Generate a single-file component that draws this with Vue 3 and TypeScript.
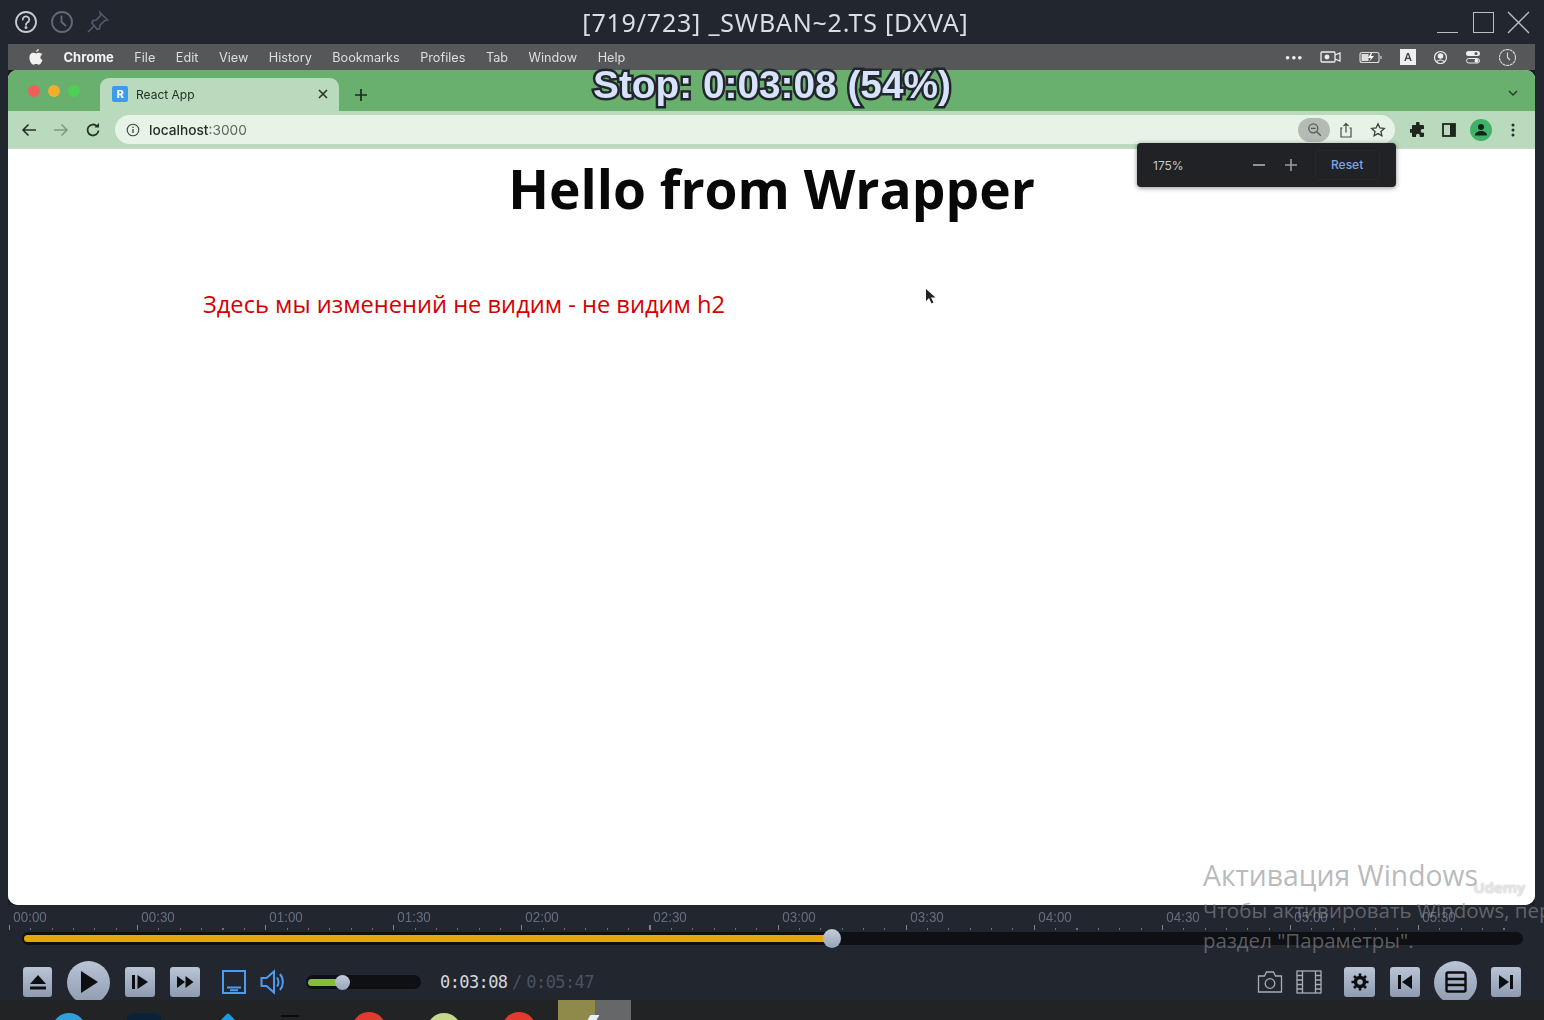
<script setup lang="ts">
const menuItems = ['File', 'Edit', 'View', 'History', 'Bookmarks', 'Profiles', 'Tab', 'Window', 'Help']
const timeLabels = ['00:00', '00:30', '01:00', '01:30', '02:00', '02:30', '03:00', '03:30', '04:00', '04:30', '05:00', '05:30']
const progress = 54
const taskIcons = ['ti-blue', 'ti-navy', 'ti-code', 'ti-term', 'ti-red', 'ti-lime', 'ti-red2']
</script>

<template>
  <div class="player">
    <header class="titlebar">
      <div class="title-left">
        <svg width="24" height="24" viewBox="0 0 24 24" fill="none" stroke="#c9ccd2" stroke-width="1.8">
          <circle cx="12" cy="12" r="10" />
          <path d="M8.800 9.600a3.200 3.200 0 1 1 4.900 2.700c-1.100.7-1.700 1.200-1.700 2.500" stroke-linecap="round" />
          <circle cx="12" cy="17.600" r=".6" fill="#c9ccd2" />
        </svg>
        <svg width="24" height="24" viewBox="0 0 24 24" fill="none" stroke="#626a78" stroke-width="1.8">
          <circle cx="12" cy="12" r="10" />
          <path d="M11.500 5.500V12l4.500 4" />
        </svg>
        <svg width="24" height="24" viewBox="0 0 24 24" fill="none" stroke="#4f5868" stroke-width="1.7">
          <path d="M14 2.500l7.500 7.500-3 .8-4.400 4.400-.6 3.600-2.400.6L5.900 13l.9-2.400 3.400-.6 4.300-4.400z" />
          <path d="M8 16l-6 6" />
        </svg>
      </div>
      <div class="title-text">[719/723] _SWBAN~2.TS [DXVA]</div>
      <div class="title-right">
        <span class="win-min"></span>
        <span class="win-max"></span>
        <svg width="24" height="24" viewBox="0 0 24 24" stroke="#b9bec6" stroke-width="1.400">
          <path d="M2 2l21 21M23 2L2 23" />
        </svg>
      </div>
    </header>

    <main class="video">
      <div class="mac-menu">
        <svg class="apple" width="14" height="16" viewBox="0 0 14 16" fill="#f1f1f1">
          <path d="M9.800 0c.1 1.200-1 2.900-2.600 2.900C7 1.500 8.300.2 9.800 0zM11.400 8.500c0-1.500.9-2.400 1.900-3-.6-1-1.800-1.700-3.100-1.700-1.300 0-2.200.7-3 .7-.9 0-1.800-.7-3-.7C2.300 3.800.4 5.500.4 8.500c0 3 2.100 7.300 4 7.300 1 0 1.500-.7 2.700-.7 1.200 0 1.700.7 2.700.7 1.600 0 3.100-2.800 3.700-4.700-1.400-.6-2.100-1.500-2.100-2.600z" />
        </svg>
        <span class="menu-app">Chrome</span>
        <span v-for="item in menuItems" :key="item" class="menu-item">{{ item }}</span>
        <div class="menu-status">
          <span class="dots">•••</span>
          <svg width="22" height="14" viewBox="0 0 22 14" fill="none" stroke="#eee" stroke-width="1.300">
            <rect x="1" y="2" width="14" height="10" rx="1" />
            <circle cx="7" cy="7" r="1.800" fill="#eee" />
            <path d="M15 5l5-2v8l-5-2" />
          </svg>
          <svg width="24" height="13" viewBox="0 0 24 13" fill="none" stroke="#ddd" stroke-width="1.100">
            <rect x="1" y="1.500" width="19" height="10" rx="2" />
            <rect x="2.500" y="3" width="7" height="7" fill="#ddd" stroke="none" />
            <path d="M12 2l-3 5h3l-2 4 5-6h-3l1-3z" fill="#fff" stroke="none" />
            <path d="M22 5v3" />
          </svg>
          <span class="a-box">A</span>
          <svg width="15" height="15" viewBox="0 0 15 15" fill="none" stroke="#eee" stroke-width="1.200">
            <circle cx="7.500" cy="7.500" r="6" />
            <circle cx="7.500" cy="6" r="2.200" fill="#eee" />
            <path d="M3.500 11.500c2-2 6-2 8 0" />
          </svg>
          <svg width="16" height="14" viewBox="0 0 16 14" fill="#eee">
            <rect x="1" y="1" width="14" height="5" rx="2.500" />
            <rect x="1.500" y="8.500" width="13" height="4.500" rx="2.200" fill="none" stroke="#eee" />
            <circle cx="11" cy="3.500" r="1.500" fill="#555" />
            <circle cx="11.500" cy="10.700" r="2" />
          </svg>
          <svg width="19" height="19" viewBox="0 0 19 19" fill="none" stroke="#ddd" stroke-width="1.100">
            <circle cx="9.500" cy="9.500" r="8" stroke-dasharray="3 .6" />
            <path d="M9.500 4.500v5l2.500 2.500" />
          </svg>
        </div>
      </div>

      <div class="browser">
        <div class="tabstrip">
          <div class="traffic">
            <i class="dot red"></i><i class="dot yellow"></i><i class="dot green"></i>
          </div>
          <div class="tab">
            <span class="favicon">R</span>
            <span class="tab-title">React App</span>
            <svg width="10" height="10" viewBox="0 0 10 10" stroke="#2a2f2b" stroke-width="1.600"><path d="M1 1l8 8M9 1L1 9" /></svg>
          </div>
          <svg class="new-tab" width="12" height="12" viewBox="0 0 12 12" stroke="#1f2a20" stroke-width="1.700"><path d="M6 0v12M0 6h12" /></svg>
          <svg class="chev" width="10" height="7" viewBox="0 0 10 7" fill="none" stroke="#2a3a2c" stroke-width="1.500"><path d="M1 1l4 4 4-4" /></svg>
        </div>

        <div class="toolbar">
          <svg width="16" height="14" viewBox="0 0 16 14" fill="none" stroke="#28302a" stroke-width="1.600"><path d="M15 7H2M7.500 1.500L2 7l5.500 5.500" /></svg>
          <svg class="fwd" width="16" height="14" viewBox="0 0 16 14" fill="none" stroke="#7f9a82" stroke-width="1.500"><path d="M1 7h13M8.500 1.500L14 7l-5.500 5.500" /></svg>
          <svg class="reload" width="16" height="16" viewBox="0 0 16 16" fill="none" stroke="#28302a" stroke-width="1.800">
            <path d="M13.500 8.500a5.500 5.500 0 1 1-1.600-4.400" />
            <path d="M14 1v4.500H9.500z" fill="#28302a" stroke="none" />
          </svg>
          <div class="omnibox">
            <svg width="14" height="14" viewBox="0 0 14 14" fill="none" stroke="#3c443e" stroke-width="1.100">
              <circle cx="7" cy="7" r="5.800" />
              <path d="M7 6v4M7 3.700v1.200" stroke-width="1.300" />
            </svg>
            <span class="url"><b>localhost</b>:3000</span>
            <div class="omni-end">
              <span class="zoom-pill">
                <svg width="15" height="15" viewBox="0 0 15 15" fill="none" stroke="#555b57" stroke-width="1.300">
                  <circle cx="6.300" cy="6.300" r="4.500" />
                  <path d="M4 6.300h4.600M9.800 9.800l4 4" />
                </svg>
              </span>
              <svg width="14" height="16" viewBox="0 0 14 16" fill="none" stroke="#454c47" stroke-width="1.200">
                <path d="M3.500 6H2v9h10V6h-1.500M7 10.500V1.500M4.500 4L7 1.500 9.500 4" />
              </svg>
              <svg width="16" height="16" viewBox="0 0 16 16" fill="none" stroke="#3a403c" stroke-width="1.300">
                <path d="M8 1.800l1.900 4.100 4.400.5-3.300 3 .9 4.400L8 11.600l-3.900 2.200.9-4.400-3.300-3 4.400-.5z" />
              </svg>
            </div>
          </div>
          <svg class="ext" width="16" height="16" viewBox="0 0 16 16" fill="#1f2620">
            <path d="M6 1.500a1.800 1.800 0 0 1 3.600 0V3H13a1 1 0 0 1 1 1v3h-1.400a1.900 1.900 0 0 0 0 3.800H14V14a1 1 0 0 1-1 1H9.800v-1.300a1.900 1.900 0 0 0-3.800 0V15H3a1 1 0 0 1-1-1v-3.200H.8a1.900 1.900 0 0 1 0-3.800H2V4a1 1 0 0 1 1-1h3z" />
          </svg>
          <svg class="side" width="14" height="14" viewBox="0 0 14 14"><rect x="1" y="1" width="12" height="12" fill="none" stroke="#1f2620" stroke-width="1.800" /><rect x="8" y="1" width="5" height="12" fill="#1f2620" /></svg>
          <span class="avatar">
            <svg width="14" height="14" viewBox="0 0 14 14" fill="#10231a"><circle cx="7" cy="4" r="3" /><path d="M1 12.500c0-6 12-6 12 0z" /></svg>
          </span>
          <svg class="kebab" width="4" height="14" viewBox="0 0 4 14" fill="#28302a"><circle cx="2" cy="2" r="1.500" /><circle cx="2" cy="7" r="1.500" /><circle cx="2" cy="12" r="1.500" /></svg>
        </div>

        <div class="page">
          <h1>Hello from Wrapper</h1>
          <p class="note">Здесь мы изменений не видим - не видим h2</p>
        </div>

        <div class="zoom-popup">
          <span class="zoom-val">175%</span>
          <span class="zoom-minus"></span>
          <svg class="zoom-plus" width="12" height="12" viewBox="0 0 12 12" stroke="#9a9da1" stroke-width="1.600"><path d="M6 0v12M0 6h12" /></svg>
          <span class="zoom-reset">Reset</span>
        </div>

        <svg class="cursor" width="12" height="17" viewBox="0 0 12 17" fill="#222"><path d="M1 1v12l3-3 2.500 5.500 2-1L6 9.500h4.500z" /></svg>
        <span class="udemy">Udemy</span>
      </div>

      <div class="osd">Stop: 0:03:08 (54%)</div>
    </main>

    <section class="timeline">
      <div class="labels">
        <span v-for="t in timeLabels" :key="t" class="label">{{ t }}</span>
      </div>
      <div class="ticks"></div>
      <div class="track">
        <div class="fill" :style="{ width: progress + '%' }">
          <span class="knob"></span>
        </div>
      </div>
    </section>

    <section class="controls">
      <div class="ctl-group">
        <button class="btn">
          <svg width="18" height="18" viewBox="0 0 18 18" fill="#0d0e10"><path d="M9 2l8 9H1z" /><rect x="1" y="13.500" width="16" height="3" /></svg>
        </button>
        <button class="btn round">
          <svg width="20" height="24" viewBox="0 0 20 24" fill="#0d0e10"><path d="M2 1l17 11L2 23z" /></svg>
        </button>
        <button class="btn">
          <svg width="18" height="16" viewBox="0 0 18 16" fill="#0d0e10"><rect x="1" y="1" width="3" height="14" /><path d="M6.500 1L17 8 6.500 15z" /></svg>
        </button>
        <button class="btn ff">
          <svg width="18" height="14" viewBox="0 0 18 14" fill="#0d0e10"><path d="M1 1l8 6-8 6zM9.500 1l8 6-8 6z" /></svg>
        </button>
        <svg class="pl-ico" width="26" height="26" viewBox="0 0 26 26" fill="none" stroke="#4d9bf0" stroke-width="2">
          <rect x="2" y="2" width="22" height="22" />
          <path d="M6 18.500h14M9 21.300h8" />
        </svg>
        <svg class="vol-ico" width="26" height="26" viewBox="0 0 26 26" fill="none" stroke="#4d9bf0" stroke-width="2">
          <path d="M1.500 9h5L14 2.500v21L6.500 17h-5z" />
          <path d="M17 8.500c2 2.500 2 6.500 0 9M20 5c3.800 4.500 3.800 11.500 0 16" />
        </svg>
        <div class="vol-slider">
          <div class="vol-fill"><span class="vol-knob"></span></div>
        </div>
        <div class="clock">0:03:08 <span class="clock-total"><i>/</i> 0:05:47</span></div>
      </div>
      <div class="ctl-group right">
        <svg width="26" height="24" viewBox="0 0 26 24" fill="none" stroke="#a9adb4" stroke-width="1.300">
          <path d="M1.500 6h6l2-4h7l2 4h6v16h-23z" />
          <circle cx="13" cy="13.500" r="4.800" />
        </svg>
        <svg class="film" width="26" height="24" viewBox="0 0 26 24" fill="none" stroke="#a9adb4" stroke-width="1.300">
          <rect x="1" y="1" width="24" height="22" />
          <path d="M6.500 1v22M19.500 1v22M1 5.500h5.500M1 10h5.500M1 14.500h5.500M1 19h5.500M19.500 5.500H25M19.500 10H25M19.500 14.500H25M19.500 19H25" />
        </svg>
        <button class="btn gear">
          <svg width="18" height="18" viewBox="0 0 18 18" fill="none" stroke="#0d0e10">
            <circle cx="9" cy="9" r="4.500" stroke-width="3.400" />
            <path d="M9 .5v3.500M9 14v3.500M.5 9H4M14 9h3.500M3 3l2.500 2.500M12.500 12.500L15 15M15 3l-2.500 2.500M5.500 12.500L3 15" stroke-width="2.600" />
          </svg>
        </button>
        <button class="btn prev">
          <svg width="16" height="16" viewBox="0 0 16 16" fill="#0d0e10"><rect x="1" y="1" width="3" height="14" /><path d="M15 1L5 8l10 7z" /></svg>
        </button>
        <button class="btn round menu">
          <svg width="22" height="22" viewBox="0 0 22 22" fill="none" stroke="#0d0e10" stroke-width="2.400">
            <rect x="1.500" y="1.500" width="19" height="19" rx="1.500" />
            <path d="M1.500 8h19M1.500 14h19" />
          </svg>
        </button>
        <button class="btn next">
          <svg width="16" height="16" viewBox="0 0 16 16" fill="#0d0e10"><rect x="12" y="1" width="3" height="14" /><path d="M1 1l10 7-10 7z" /></svg>
        </button>
      </div>
    </section>

    <footer class="taskbar">
      <span v-for="icon in taskIcons" :key="icon" class="task-icon" :class="icon"></span>
      <div class="task-active"><span class="task-olive"></span><span class="task-gray"></span></div>
    </footer>

    <div class="activation">
      <div class="act-title">Активация Windows</div>
      <div class="act-text">Чтобы активировать Windows, перейдите в<br />раздел "Параметры".</div>
    </div>
  </div>
</template>

<style>
html, body { margin: 0; background: #22262f; overflow: hidden; }
</style>

<style scoped>
.player {
  position: relative;
  width: 1544px;
  height: 1020px;
  overflow: hidden;
  display: flex;
  flex-direction: column;
  background: #22262f;
  font-family: 'Liberation Sans', Arial, sans-serif;
}

.titlebar {
  position: relative;
  height: 44px;
  flex: none;
  display: flex;
  align-items: center;
  justify-content: space-between;
  padding: 0 14px;
}
.title-left { display: flex; gap: 12px; }
.title-text {
  position: absolute;
  left: 0;
  right: 0;
  top: 5px;
  margin-left: 7px;
  text-align: center;
  font-family: 'Noto Sans', sans-serif;
  font-size: 25px;
  line-height: 34px;
  letter-spacing: 0.8px;
  color: #d8dde6;
  filter: blur(0.3px);
}
.title-right { display: flex; align-items: center; }
.win-min { width: 21px; height: 1.5px; background: #b9bec6; margin: 21px 15px 0 0; }
.win-max { width: 19px; height: 19px; border: 1.500px solid #b9bec6; margin-right: 12px; }

.video {
  position: relative;
  height: 861px;
  flex: none;
  margin: 0 9px 0 8px;
  display: flex;
  flex-direction: column;
  background: #1b1d22;
}

.mac-menu {
  height: 26px;
  flex: none;
  background: #565759;
  display: flex;
  align-items: center;
  gap: 20.5px;
  padding: 0 0 0 21px;
  font-family: Inter, sans-serif;
  font-size: 12.7px;
  color: #dedede;
  filter: blur(0.35px);
}
.menu-app { font-weight: 700; font-size: 13px; color: #f3f3f3; }
.menu-status {
  margin-left: auto;
  display: flex;
  align-items: center;
  gap: 17px;
  padding-right: 18px;
}
.dots { font-size: 11px; color: #eee; }
.a-box {
  width: 16px;
  height: 16px;
  background: #f0f0f0;
  color: #444;
  font-size: 11px;
  text-align: center;
  line-height: 16px;
  font-weight: 600;
}

.browser {
  position: relative;
  flex: 1;
  display: flex;
  flex-direction: column;
  border-radius: 9px 9px 10px 10px;
  overflow: hidden;
  background: #fff;
}

.tabstrip {
  height: 41px;
  flex: none;
  background: #69b06f;
  display: flex;
  align-items: flex-end;
}
.traffic { display: flex; gap: 8px; align-self: flex-start; padding: 15px 0 0 20px; width: 72px; box-sizing: border-box; }
.dot { width: 12px; height: 12px; border-radius: 50%; filter: blur(0.5px); flex: none; }
.red { background: #f0605a; }
.yellow { background: #f3ae2e; }
.green { background: #4fcf55; }
.tab {
  width: 239px;
  height: 33px;
  margin-left: 20px;
  box-sizing: border-box;
  background: #b9dabc;
  border-radius: 9px 9px 0 0;
  display: flex;
  align-items: center;
  padding: 0 11px 1px 12px;
  font-family: Inter, sans-serif;
  font-size: 12px;
  color: #263028;
}
.favicon {
  width: 16px;
  height: 16px;
  margin-right: 8px;
  background: #3f9be8;
  border-radius: 2px;
  color: #fff;
  font-size: 11px;
  font-weight: 700;
  text-align: center;
  line-height: 16px;
}
.tab-title { flex: 1; filter: blur(0.3px); }
.new-tab { margin: 0 0 10px 16px; }
.chev { margin: 0 17px 14px auto; }

.toolbar {
  height: 37px;
  flex: none;
  box-sizing: border-box;
  background: #b9dabc;
  display: flex;
  align-items: center;
  padding: 0 14px 0 13px;
}
.fwd { margin-left: 16px; }
.reload { margin-left: 16px; }
.omnibox {
  width: 1280px;
  height: 29px;
  margin-left: 14px;
  box-sizing: border-box;
  background: #e8f3e8;
  border-radius: 15px;
  display: flex;
  align-items: center;
  padding: 0 9px 0 11px;
  font-family: Inter, sans-serif;
  font-size: 13.7px;
  color: #5c665e;
}
.url { margin-left: 9px; filter: blur(0.3px); }
.url b { font-weight: 500; color: #262c27; }
.omni-end { margin-left: auto; display: flex; align-items: center; gap: 17px; }
.zoom-pill {
  width: 32px;
  height: 24px;
  border-radius: 12px;
  background: #b4bbb5;
  display: flex;
  align-items: center;
  justify-content: center;
  margin-right: -8px;
}
.ext { margin-left: 15px; }
.side { margin-left: 16px; }
.avatar {
  width: 22px;
  height: 22px;
  margin-left: 14px;
  border-radius: 50%;
  background: #3fb268;
  display: flex;
  align-items: center;
  justify-content: center;
}
.kebab { margin-left: 19px; }

.page { flex: 1; background: #fff; border-top: 1px solid #c9dccb; }
h1 {
  margin: 7px 0 0;
  text-align: center;
  font-family: 'Open Sans', sans-serif;
  font-size: 53.3px;
  line-height: 66px;
  font-weight: 700;
  color: #080808;
}
.note {
  margin: 66px 0 0 195px;
  font-family: 'Open Sans', sans-serif;
  font-size: 23.65px;
  line-height: 32px;
  color: #d40000;
}

.zoom-popup {
  position: absolute;
  left: 1129px;
  top: 73px;
  width: 259px;
  height: 44px;
  box-sizing: border-box;
  background: #202225;
  border-radius: 4px;
  box-shadow: 0 1px 5px rgba(0, 0, 0, 0.45);
  display: flex;
  align-items: center;
  padding: 0 16px;
  font-family: Inter, sans-serif;
  font-size: 12px;
  color: #c6c8cb;
}
.zoom-minus { width: 12px; height: 2px; background: #8f9296; margin-left: 69px; }
.zoom-plus { margin-left: 20px; }
.zoom-reset {
  margin-left: 18px;
  width: 65px;
  height: 30px;
  box-sizing: border-box;
  border: 1px solid #26282b;
  border-radius: 3px;
  text-align: center;
  line-height: 28px;
  color: #7ea4e6;
  font-weight: 500;
}
.cursor { position: absolute; left: 917px; top: 218px; }
.udemy {
  position: absolute;
  right: 10px;
  bottom: 8px;
  font-family: 'Open Sans', sans-serif;
  font-size: 15px;
  font-weight: 600;
  color: #e6e6e6;
  text-shadow: 0 0 2px #bbb;
}

.osd {
  position: absolute;
  left: 585px;
  top: 18px;
  font-family: 'Liberation Sans', Arial, sans-serif;
  font-weight: 700;
  font-size: 38.8px;
  line-height: 46px;
  color: #d6e3fb;
  -webkit-text-stroke: 5px #23262c;
  paint-order: stroke fill;
  white-space: nowrap;
  filter: blur(0.4px);
}

.timeline {
  position: relative;
  height: 50px;
  flex: none;
  box-sizing: border-box;
  padding: 0 21px 0 22px;
}
.labels {
  display: flex;
  margin: 0 0 0 -56px;
  padding-top: 5px;
}
.label {
  width: 128.1px;
  flex: none;
  text-align: center;
  font-size: 14.5px;
  line-height: 15px;
  color: #626e80;
  transform: scaleX(0.92);
}
.ticks {
  height: 5px;
  margin: 0 0 0 -13px;
  background-image:
    repeating-linear-gradient(90deg, #7a8494 0 1px, transparent 1px 128.1px),
    repeating-linear-gradient(90deg, #697280 0 1px, transparent 1px 21.35px);
  background-size: 100% 5px, 100% 2px;
  background-repeat: no-repeat;
  background-position: 0 0, 0 3px;
}
.track {
  position: relative;
  height: 13px;
  margin-top: 2px;
  background: #0e1014;
  border-radius: 7px;
}
.fill {
  position: relative;
  height: 7px;
  top: 3px;
  left: 2px;
  background: #e0a80a;
  border-radius: 4px 0 0 4px;
}
.knob {
  position: absolute;
  right: -6px;
  top: -6px;
  width: 18px;
  height: 19px;
  border-radius: 50%;
  background: linear-gradient(#c3cddd, #98a3b6);
}

.controls {
  height: 45px;
  flex: none;
  display: flex;
  justify-content: space-between;
  padding: 0 23px;
  overflow: hidden;
}
.ctl-group { display: flex; align-items: center; height: 54px; flex: none; }
.btn {
  width: 30px;
  height: 30px;
  flex: none;
  padding: 0;
  border: none;
  border-radius: 3px;
  background: linear-gradient(#b9c4d6, #8f9bb0);
  display: flex;
  align-items: center;
  justify-content: center;
  margin-right: 15px;
}
.btn:first-child { width: 29px; }
.btn.round {
  width: 43px;
  height: 43px;
  border-radius: 50%;
}
.btn.ff { margin-right: 21px; }
.pl-ico { margin-right: 13px; }
.vol-slider {
  width: 115px;
  height: 14px;
  margin-left: 20px;
  border-radius: 7px;
  background: #0e1014;
  display: flex;
  align-items: center;
  padding-left: 2px;
  box-sizing: border-box;
}
.vol-fill { position: relative; width: 34px; height: 7px; border-radius: 4px 0 0 4px; background: #85bd33; }
.vol-knob {
  position: absolute;
  right: -8px;
  top: -4px;
  width: 15px;
  height: 15px;
  border-radius: 50%;
  background: linear-gradient(#c3cddd, #98a3b6);
}
.clock {
  margin-left: 19px;
  font-family: 'DejaVu Sans Mono', monospace;
  font-size: 17px;
  letter-spacing: -0.6px;
  word-spacing: -5px;
  color: #d6d8dc;
  white-space: pre;
}
.clock-total { color: #4a5261; }
.clock-total i { font-style: normal; }
.film { margin-left: 13px; margin-right: 22px; }
.gear { width: 31px; margin-right: 15px; }
.prev { margin-right: 14px; }
.menu { margin-right: 14px; }
.next { margin-right: 0; }

.taskbar {
  position: relative;
  flex: 1;
  background: #212325;
  display: flex;
  overflow: hidden;
}
.task-icon {
  position: absolute;
  top: 13px;
  width: 34px;
  height: 34px;
  border-radius: 50%;
}
.ti-blue { left: 52px; background: #2ea0dc; }
.ti-navy { left: 127px; border-radius: 6px; background: #0a2238; }
.ti-code { left: 218px; top: 17px; width: 20px; height: 20px; border-radius: 2px; background: #1a9be6; transform: rotate(45deg); }
.ti-term { left: 281px; top: 15px; width: 18px; height: 2px; border-radius: 0; background: #0b0b0b; }
.ti-red { left: 352px; top: 12px; background: #e33a2e; }
.ti-lime { left: 427px; background: #c4d98a; }
.ti-red2 { left: 502px; top: 12px; background: #e33a2e; }
.task-active { position: absolute; left: 558px; top: 0; display: flex; height: 20px; }
.task-olive { width: 37px; background: #8f8a4a; }
.task-gray { position: relative; width: 36px; background: #666769; }
.task-gray::before {
  content: '';
  position: absolute;
  left: -6px;
  top: 15px;
  width: 9px;
  height: 5px;
  background: #e8f1fb;
  transform: skewX(-30deg);
}

.activation {
  position: absolute;
  left: 1203px;
  top: 856px;
  width: 420px;
  font-family: 'Open Sans', sans-serif;
  color: rgba(140, 142, 146, 0.62);
  pointer-events: none;
}
.act-title { font-size: 28.3px; line-height: 38px; }
.act-text { font-size: 20.5px; line-height: 30px; margin-top: 1px; white-space: nowrap; }
</style>
